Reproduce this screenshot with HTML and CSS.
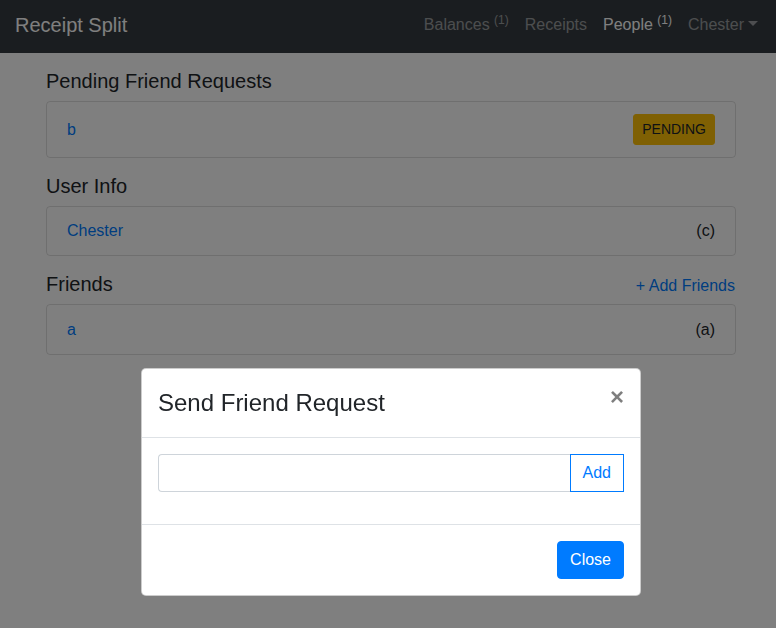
FILE: index.html
```html
<!DOCTYPE html>
<html lang="en">
<head>
<meta charset="utf-8">
<title>Receipt Split</title>
<link rel="stylesheet" href="styles.css">
</head>
<body>
<div class="page">
  <nav class="navbar">
    <a class="brand" href="#">Receipt Split</a>
    <ul class="nav">
      <li><a class="nav-link" href="#">Balances <sup>(1)</sup></a></li>
      <li><a class="nav-link" href="#">Receipts</a></li>
      <li><a class="nav-link active" href="#">People <sup>(1)</sup></a></li>
      <li><a class="nav-link dropdown-toggle" href="#">Chester</a></li>
    </ul>
  </nav>
  <main class="container">
    <h5 class="section-title">Pending Friend Requests</h5>
    <ul class="list">
      <li class="list-item"><a href="#">b</a><span class="btn-pending">PENDING</span></li>
    </ul>
    <h5 class="section-title">User Info</h5>
    <ul class="list">
      <li class="list-item"><a href="#">Chester</a><span>(c)</span></li>
    </ul>
    <div class="section-row">
      <h5 class="section-title">Friends</h5>
      <a href="#" class="add-link">+ Add Friends</a>
    </div>
    <ul class="list">
      <li class="list-item list-item-friend"><a href="#">a</a><span>(a)</span></li>
    </ul>
  </main>
</div>
<div class="backdrop"></div>
<div class="modal">
  <div class="modal-dialog">
    <div class="modal-content">
      <div class="modal-header">
        <h4 class="modal-title">Send Friend Request</h4>
        <button class="close" type="button">&times;</button>
      </div>
      <div class="modal-body">
        <div class="input-group">
          <input class="form-control" type="text">
          <button class="btn-outline" type="button">Add</button>
        </div>
      </div>
      <div class="modal-footer">
        <button class="btn-primary" type="button">Close</button>
      </div>
    </div>
  </div>
</div>
</body>
</html>
```

FILE: styles.css
```css
html, body {
  margin: 0;
  padding: 0;
  overflow: hidden;
}
body {
  font-family: "Liberation Sans", Arial, sans-serif;
  font-size: 16px;
  line-height: 1.5;
  color: #212529;
  background: #fff;
}
a {
  color: #007bff;
  text-decoration: none;
}
.page {
  width: 782px;
}
.navbar {
  display: flex;
  align-items: flex-start;
  justify-content: space-between;
  height: 53px;
  padding: 0 16px 0 15px;
  box-sizing: border-box;
  background: #343a40;
}
.brand {
  color: #fff;
  font-size: 20px;
  line-height: 30px;
  padding-top: 10px;
}
.nav {
  display: flex;
  list-style: none;
  margin: 0;
  padding: 13px 0 0;
}
.nav-link {
  display: block;
  padding: 0 8px;
  line-height: 24px;
  color: rgba(255, 255, 255, .5);
}
.nav-link.active {
  color: #fff;
}
.nav-link sup {
  font-size: 12px;
  line-height: 0;
  position: relative;
  vertical-align: baseline;
  top: -6px;
}
.dropdown-toggle::after {
  content: "";
  display: inline-block;
  margin-left: 4px;
  vertical-align: 4px;
  border-top: 5px solid;
  border-left: 5px solid transparent;
  border-right: 5px solid transparent;
}
.container {
  width: 690px;
  margin: 0 auto;
  padding: 16px 0 0;
}
.section-title {
  margin: 0 0 8px;
  font-size: 20px;
  font-weight: 500;
  line-height: 24px;
}
.section-row {
  display: flex;
  justify-content: space-between;
  align-items: baseline;
}
.add-link {
  margin-top: -1px;
  margin-right: 1px;
}
.list {
  list-style: none;
  margin: 0 0 16px;
  padding: 0;
  border: 1px solid rgba(0, 0, 0, .125);
  border-radius: 4px;
}
.list-item {
  display: flex;
  justify-content: space-between;
  align-items: center;
  padding: 12px 20px;
  line-height: 24px;
}
.list-item-friend {
  padding: 13px 20px 12px;
}
.btn-pending {
  display: inline-block;
  background: #ffc107;
  border: 1px solid #ffc107;
  color: #212529;
  font-size: 14px;
  line-height: 21px;
  padding: 4px 8px;
  border-radius: 3px;
}
.backdrop {
  position: fixed;
  top: 0;
  left: 0;
  right: 0;
  bottom: 0;
  background: rgba(0, 0, 0, .5);
}
.modal {
  position: fixed;
  top: 0;
  left: 0;
  width: 782px;
  height: 100%;
}
.modal-dialog {
  width: 500px;
  margin: 368px auto 0;
}
.modal-content {
  background: #fff;
  border: 1px solid rgba(0, 0, 0, .2);
  border-radius: 5px;
}
.modal-header {
  display: flex;
  align-items: flex-start;
  padding: 16px;
  border-bottom: 1px solid #dee2e6;
}
.modal-title {
  margin: 0;
  font-size: 24px;
  font-weight: 500;
  line-height: 36px;
}
.close {
  margin: -16px -16px -16px auto;
  padding: 16px;
  background: transparent;
  border: 0;
  font-family: "Liberation Sans", Arial, sans-serif;
  font-size: 24px;
  font-weight: 700;
  line-height: 1;
  color: #000;
  opacity: .5;
}
.modal-body {
  padding: 16px 16px 32px;
}
.input-group {
  display: flex;
}
.form-control {
  flex: 1;
  min-width: 0;
  height: 38px;
  box-sizing: border-box;
  border: 1px solid #ced4da;
  border-right: 0;
  border-radius: 4px 0 0 4px;
  padding: 6px 12px;
  font: inherit;
  background: #fff;
}
.btn-outline {
  font-family: "Liberation Sans", Arial, sans-serif;
  font-size: 16px;
  line-height: 24px;
  padding: 6px 12px;
  background: #fff;
  color: #007bff;
  border: 1px solid #007bff;
  border-radius: 0;
}
.modal-footer {
  display: flex;
  justify-content: flex-end;
  padding: 16px;
  border-top: 1px solid #dee2e6;
}
.btn-primary {
  font-family: "Liberation Sans", Arial, sans-serif;
  font-size: 16px;
  line-height: 24px;
  padding: 6px 12px;
  background: #007bff;
  color: #fff;
  border: 1px solid #007bff;
  border-radius: 4px;
}
```
